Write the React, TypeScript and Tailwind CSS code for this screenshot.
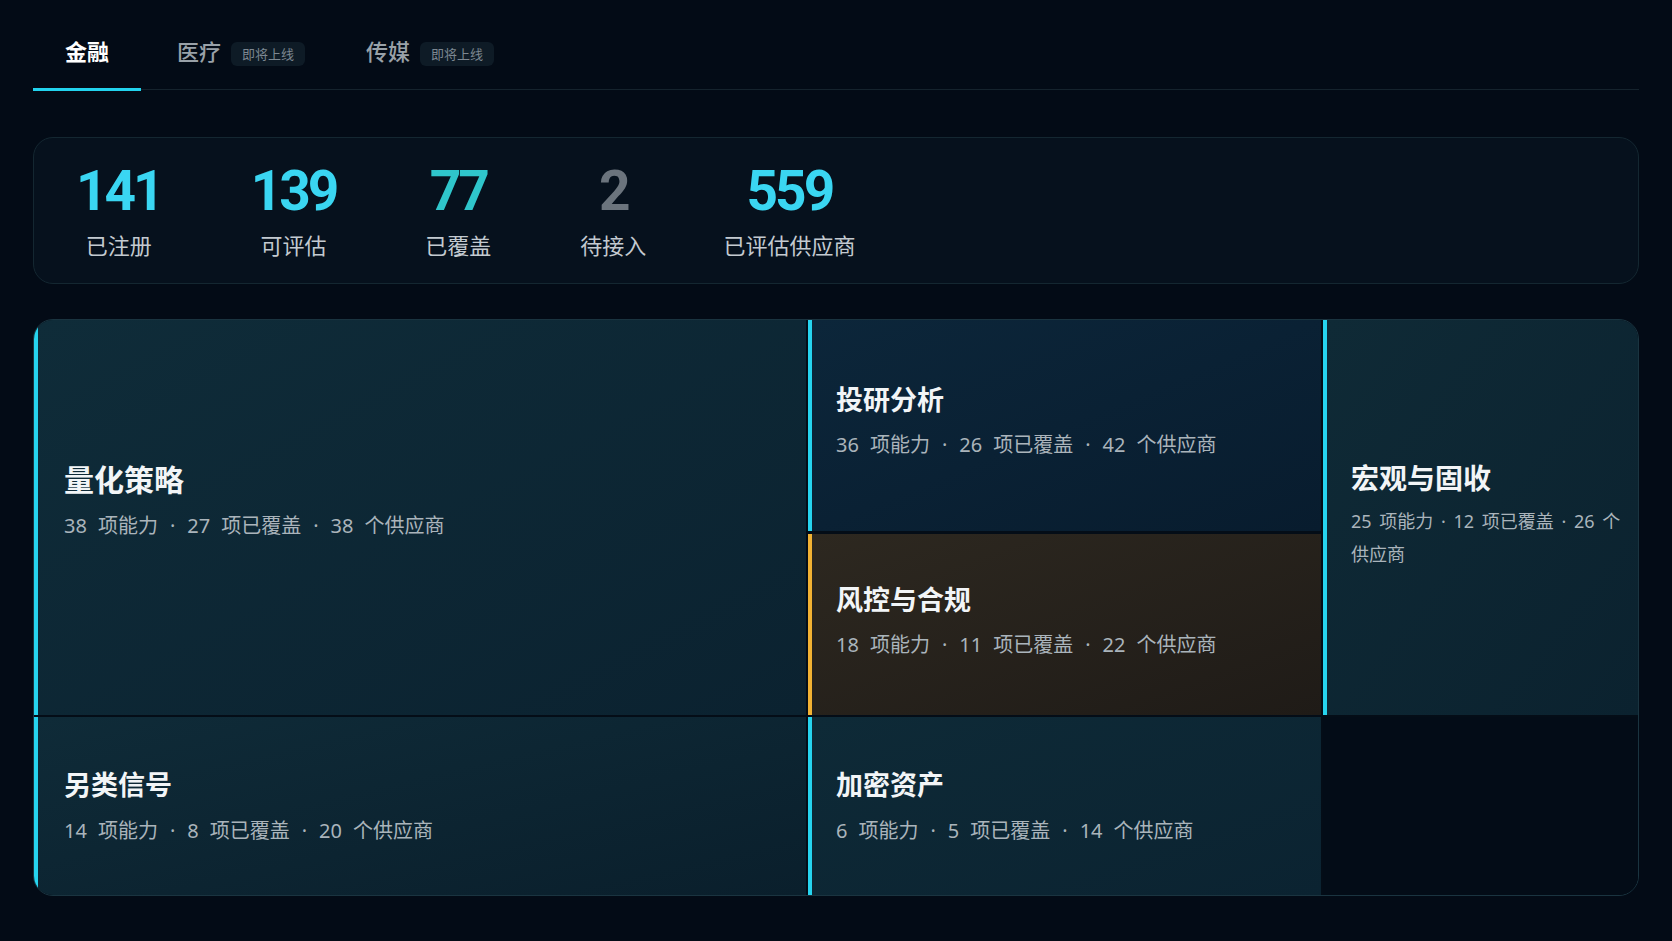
import React from 'react';

type Stat = { value: string; label: string; color: string; shift?: string };

const stats: Stat[] = [
  { value: '141', label: '已注册', color: 'text-[#3ad6f2]' },
  { value: '139', label: '可评估', color: 'text-[#3ad6f2]' },
  { value: '77', label: '已覆盖', color: 'text-[#2fc6cb]' },
  { value: '2', label: '待接入', color: 'text-[#6b747d]' },
  { value: '559', label: '已评估供应商', color: 'text-[#3ad6f2]', shift: '-ml-[12px]' },
];

type Sector = {
  name: string;
  caps: number;
  covered: number;
  vendors: number;
  accent: string;
  bg: string;
  title: string;
  pad: string;
  narrow?: boolean;
};

const quant: Sector = {
  name: '量化策略', caps: 38, covered: 27, vendors: 38,
  accent: 'border-[#26d4ef]', bg: 'from-[#0f2c39] to-[#0b2230]',
  title: 'text-[30px]', pad: 'pl-[26px] pb-[36px]',
};
const research: Sector = {
  name: '投研分析', caps: 36, covered: 26, vendors: 42,
  accent: 'border-[#26d4ef]', bg: 'from-[#0c263a] to-[#081c2e]',
  title: 'text-[27px]', pad: 'pl-6 pb-[10px]',
};
const risk: Sector = {
  name: '风控与合规', caps: 18, covered: 11, vendors: 22,
  accent: 'border-[#f2b233]', bg: 'from-[#2d2820] to-[#1f1b17]',
  title: 'text-[27px]', pad: 'pl-6 pb-[8px]',
};
const macro: Sector = {
  name: '宏观与固收', caps: 25, covered: 12, vendors: 26,
  accent: 'border-[#26d4ef]', bg: 'from-[#0f2a36] to-[#0b222f]',
  title: 'text-[28px]', pad: 'pl-6 pr-[10px] pb-[5px]', narrow: true,
};
const alt: Sector = {
  name: '另类信号', caps: 14, covered: 8, vendors: 20,
  accent: 'border-[#26d4ef]', bg: 'from-[#0f2b38] to-[#0a1f2c]',
  title: 'text-[27px]', pad: 'pl-[26px]',
};
const crypto: Sector = {
  name: '加密资产', caps: 6, covered: 5, vendors: 14,
  accent: 'border-[#26d4ef]', bg: 'from-[#0e2a37] to-[#0b2331]',
  title: 'text-[27px]', pad: 'pl-6',
};

function Tile({ s, className = '' }: { s: Sector; className?: string }) {
  return (
    <div className={`flex flex-col justify-center border-l-4 bg-linear-to-br ${s.accent} ${s.bg} ${s.pad} ${className}`}>
      <h3 className={`font-bold leading-[1.4] text-[#f2f5f7] ${s.title}`}>{s.name}</h3>
      {s.narrow ? (
        <p className="mt-[6px] text-[18px] leading-[33px] text-[#aab4bb] [word-spacing:3px]">
          {`${s.caps} 项能力 · ${s.covered} 项已覆盖 · ${s.vendors} 个供应商`}
        </p>
      ) : (
        <div className={`${s.name === '量化策略' ? 'mt-[10px]' : 'mt-[12px]'} flex items-center text-[20px] leading-[30px] text-[#aab4bb]`}>
          <span>{s.caps}</span>
          <span className="ml-[11px]">项能力</span>
          <span className="mx-[12px]">·</span>
          <span>{s.covered}</span>
          <span className="ml-[11px]">项已覆盖</span>
          <span className="mx-[12px]">·</span>
          <span>{s.vendors}</span>
          <span className="ml-[11px]">个供应商</span>
        </div>
      )}
    </div>
  );
}

function Tabs() {
  return (
    <nav className="flex items-end border-b border-[#15232d]">
      <button className="-mb-[2px] border-b-[3px] border-[#22d3ee] px-8 pt-[15px] pb-[20px] text-[22px] font-bold leading-[33px] text-white">
        金融
      </button>
      {['医疗', '传媒'].map((t) => (
        <div
          key={t}
          className="-mb-[2px] ml-1 flex items-center gap-[10px] border-b-[3px] border-transparent pl-8 pr-[25px] pt-[15px] pb-[20px]"
        >
          <span className="text-[22px] font-medium leading-[33px] text-[#99a1a8]">{t}</span>
          <span className="mt-[4px] rounded-md bg-[#0e1b26] px-[11px] py-[3px] text-[13px] leading-[18px] text-[#7c8791]">
            即将上线
          </span>
        </div>
      ))}
    </nav>
  );
}

export default function App() {
  return (
    <div className="min-h-screen bg-[#030b16] px-[33px] pt-[20px] pb-[46px] [font-family:'Noto_Sans','Noto_Sans_CJK_SC',sans-serif]">
      <Tabs />

      {/* summary */}
      <section className="mt-[47px] flex gap-[89px] rounded-[20px] border border-[#142731] bg-[#06111d] pt-[26px] pb-[21px] pl-[42px]">
        {stats.map((st) => (
          <div key={st.label} className={`flex flex-col items-center ${st.shift ?? ''}`}>
            <div className={`text-[55px] font-bold leading-none tracking-[-3px] [font-family:Roboto,'Noto_Sans',sans-serif] ${st.color}`}>
              {st.value}
            </div>
            <div className="mt-[10px] text-[22px] leading-[1.5] text-[#c3cad0]">{st.label}</div>
          </div>
        ))}
      </section>

      {/* treemap */}
      <section className="mt-[35px] grid h-[577px] grid-cols-[772px_513px_1fr] grid-rows-[395px_1fr] gap-[2px] overflow-hidden rounded-[20px] border border-[#1a3440] bg-[#040d17]">
        <Tile s={quant} />
        <div className="flex flex-col gap-[3px]">
          <Tile s={research} className="h-[211px]" />
          <Tile s={risk} className="flex-1" />
        </div>
        <Tile s={macro} />
        <Tile s={alt} />
        <Tile s={crypto} />
        <div className="bg-[#030c17]" />
      </section>
    </div>
  );
}
